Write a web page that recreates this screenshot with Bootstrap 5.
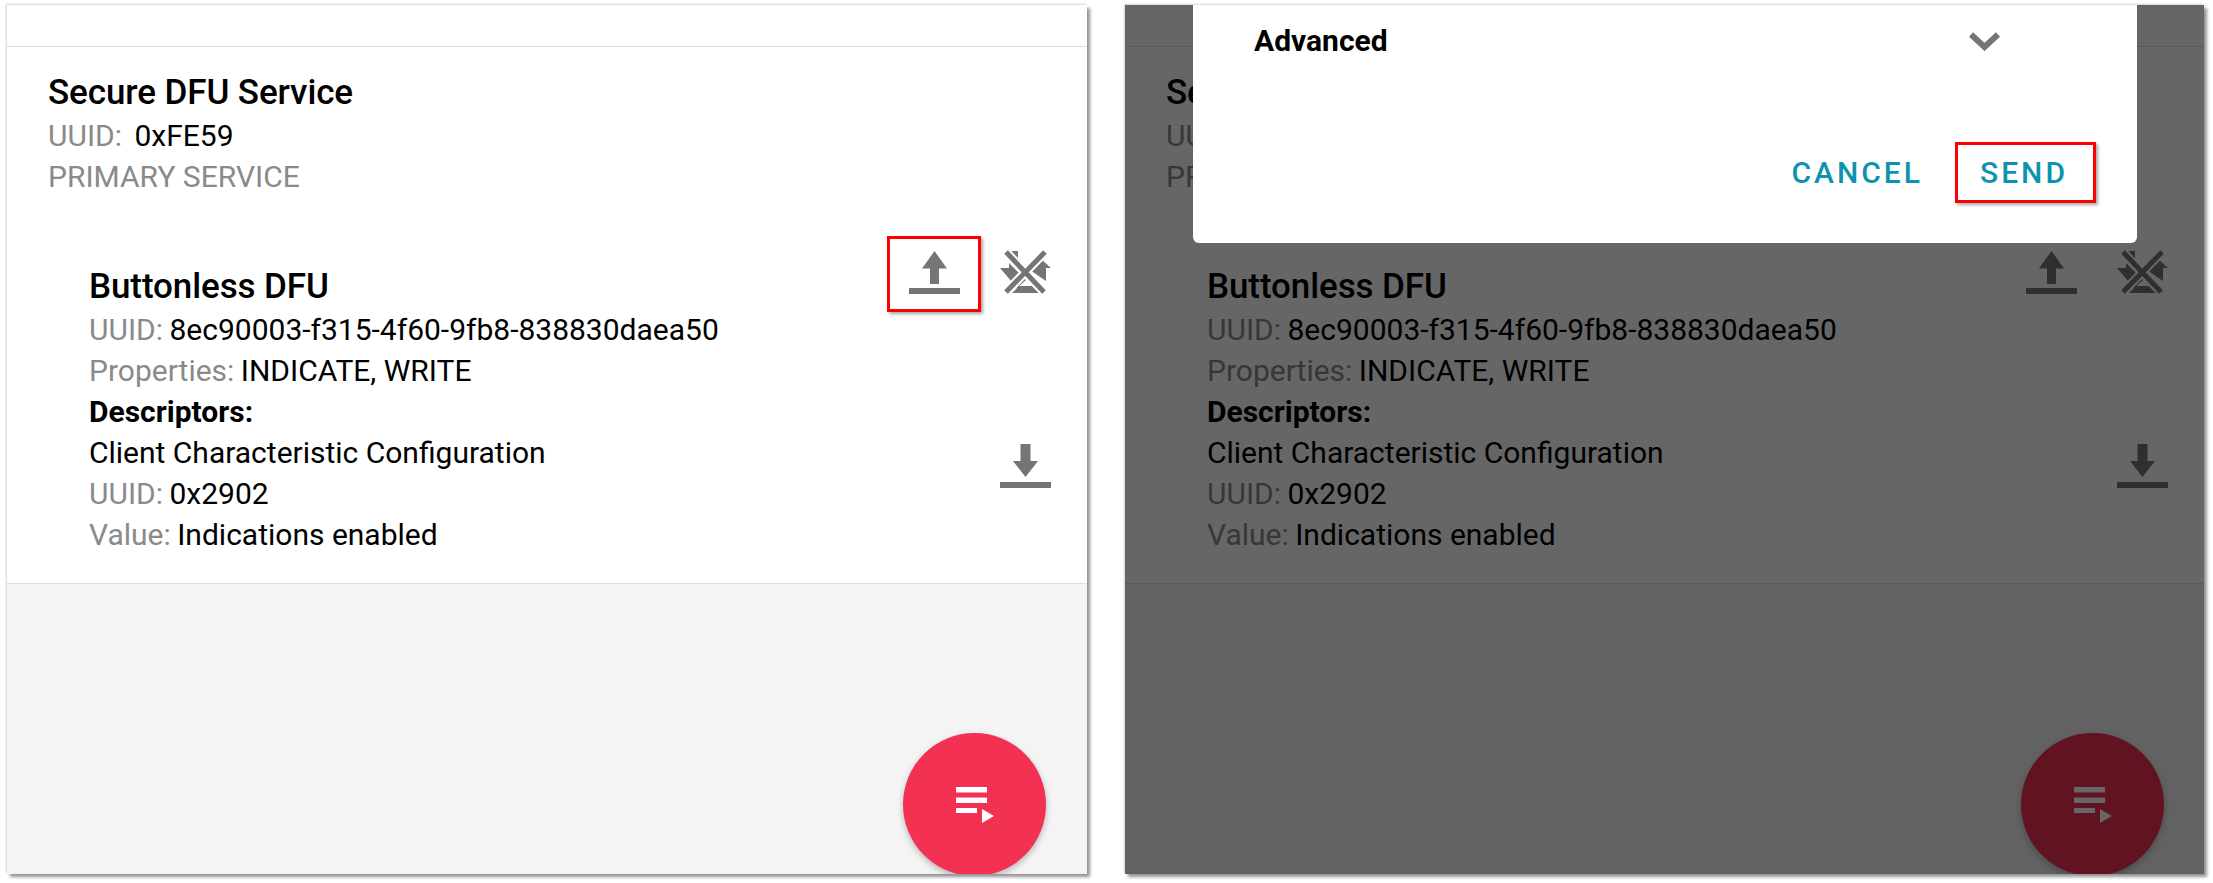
<!DOCTYPE html>
<html lang="en">
<head>
<meta charset="utf-8">
<title>Secure DFU Service</title>
<link href="https://cdn.jsdelivr.net/npm/bootstrap@5.3.0/dist/css/bootstrap.min.css" rel="stylesheet">
<style>
html,body{height:100%}
body{background:#fff;font-family:Roboto,"Liberation Sans",sans-serif;color:#000;overflow:hidden}
.stage{height:883px;padding:5px 9px 9px 7px;gap:38px}
.phone{flex:0 0 1080px;height:869px;background:#f4f4f4;box-shadow:3px 3px 3px rgba(0,0,0,.42),-1px -1px 2px rgba(0,0,0,.18);overflow:hidden}
.phone-r{flex-basis:1079px}
.toolbar-gap{height:42px;background:#fff;border-bottom:1px solid #dedede}
.sheet{background:#fff;border-bottom:1px solid #dedede;height:537px}
.svc{padding:25px 0 0 41px}
.ttl{font-size:35px;font-weight:500;line-height:41px;margin-bottom:2px;letter-spacing:-.1px}
.ln{font-size:30px;line-height:41px;white-space:nowrap}
.mut{color:#8a8a8a}
.gap1{margin-right:5px}
.chr{padding:0 36px 0 82px;margin-top:38px}
.chr .ttl{margin-top:31px}
.chr .mut{margin-right:-1px}
.acts{gap:19px;margin-top:1px}
.acts .ico{margin-bottom:4px}
.bx{width:94px;height:76px;border:3px solid #f00;box-shadow:2px 2px 3px rgba(0,0,0,.35)}
.ico{display:block}
.iconcell{width:94px;height:76px}
.dl-row{margin-top:132px}
.fab{position:absolute;left:896px;top:728px;width:143px;height:143px;border-radius:50%;background:#f23153;box-shadow:0 3px 6px rgba(0,0,0,.25)}
.scrim{position:absolute;inset:0;background:rgba(0,0,0,.6)}
.dlg{position:absolute;left:68px;top:0;width:944px;height:238px;background:#fff;border-radius:0 0 6px 6px}
.adv-row{padding:15px 137px 0 61px}
.adv{font-size:30px;font-weight:700;line-height:42px}
.dlg-actions{position:absolute;right:41px;bottom:40px;gap:32px}
.act{font-size:30px;font-weight:500;letter-spacing:3px;color:#0d93b0;line-height:1;padding-top:1px}
.send-box{width:141px;height:61px;border:3px solid #f00;padding-right:3px;box-shadow:2px 2px 3px rgba(0,0,0,.35)}
</style>
</head>
<body>
<svg width="0" height="0" class="position-absolute">
  <symbol id="i-up" viewBox="0 0 51 43"><path fill="#757575" d="M25.500 0L38 17.500H30V33H21V17.500H13ZM0 37H51V43H0Z"/></symbol>
  <symbol id="i-down" viewBox="0 0 51 44"><path fill="#757575" d="M20.500 0H30.500V17H38L25.500 33L13 17H20.500ZM0 38H51V44H0Z"/></symbol>
  <symbol id="i-off" viewBox="0 0 51 44">
    <path fill="#757575" d="M0 18H9V13L26 30L17 38ZM11 1H18V11ZM30 20L41 9L51 18H46V31ZM12 43L19 36H32L39 43Z"/>
    <path d="M6 2L44 42M45 2L6 42" fill="none" stroke="#fff" stroke-width="9"/>
    <path d="M6 2L44 42M45 2L6 42" fill="none" stroke="#757575" stroke-width="5"/>
  </symbol>
  <symbol id="i-fab" viewBox="0 0 38 36"><path d="M0 0H31V5.500H0ZM0 10.500H31V16H0ZM0 21H21V26H0ZM26 22L38 29L26 36Z"/></symbol>
</svg>
<div class="stage d-flex">

<div class="phone phone-l position-relative">
  <div class="toolbar-gap"></div>
  <div class="sheet">
    <div class="svc">
      <div class="ttl">Secure DFU Service</div>
      <div class="ln"><span class="mut gap1">UUID:</span> 0xFE59</div>
      <div class="ln mut">PRIMARY SERVICE</div>
    </div>
    <div class="chr d-flex justify-content-between align-items-start">
      <div>
        <div class="ttl">Buttonless DFU</div>
        <div class="ln"><span class="mut">UUID:</span> 8ec90003-f315-4f60-9fb8-838830daea50</div>
        <div class="ln"><span class="mut">Properties:</span> INDICATE, WRITE</div>
        <div class="ln fw-bold">Descriptors:</div>
        <div class="ln">Client Characteristic Configuration</div>
        <div class="ln"><span class="mut">UUID:</span> 0x2902</div>
        <div class="ln"><span class="mut">Value:</span> Indications enabled</div>
      </div>
      <div class="d-flex flex-column align-items-end">
        <div class="d-flex acts align-items-center">
          <div class="bx d-flex align-items-center justify-content-center">
            <svg class="ico" width="51" height="43"><use href="#i-up"/></svg>
          </div>
          <svg class="ico" width="51" height="44"><use href="#i-off"/></svg>
        </div>
        <svg class="ico dl-row" width="51" height="44"><use href="#i-down"/></svg>
      </div>
    </div>
  </div>
  <div class="fab d-flex align-items-center justify-content-center">
    <svg width="38" height="36" fill="#fff"><use href="#i-fab"/></svg>
  </div>
</div>

<div class="phone phone-r position-relative">
  <div class="toolbar-gap"></div>
  <div class="sheet">
    <div class="svc">
      <div class="ttl">Secure DFU Service</div>
      <div class="ln"><span class="mut gap1">UUID:</span> 0xFE59</div>
      <div class="ln mut">PRIMARY SERVICE</div>
    </div>
    <div class="chr d-flex justify-content-between align-items-start">
      <div>
        <div class="ttl">Buttonless DFU</div>
        <div class="ln"><span class="mut">UUID:</span> 8ec90003-f315-4f60-9fb8-838830daea50</div>
        <div class="ln"><span class="mut">Properties:</span> INDICATE, WRITE</div>
        <div class="ln fw-bold">Descriptors:</div>
        <div class="ln">Client Characteristic Configuration</div>
        <div class="ln"><span class="mut">UUID:</span> 0x2902</div>
        <div class="ln"><span class="mut">Value:</span> Indications enabled</div>
      </div>
      <div class="d-flex flex-column align-items-end">
        <div class="d-flex acts align-items-center">
          <div class="iconcell d-flex align-items-center justify-content-center">
            <svg class="ico" width="51" height="43"><use href="#i-up"/></svg>
          </div>
          <svg class="ico" width="51" height="44"><use href="#i-off"/></svg>
        </div>
        <svg class="ico dl-row" width="51" height="44"><use href="#i-down"/></svg>
      </div>
    </div>
  </div>
  <div class="fab d-flex align-items-center justify-content-center">
    <svg width="38" height="36" fill="#fff"><use href="#i-fab"/></svg>
  </div>
  <div class="scrim"></div>
  <div class="dlg">
    <div class="adv-row d-flex justify-content-between align-items-center">
      <div class="adv">Advanced</div>
      <svg width="31" height="19" viewBox="0 0 31 19"><path d="M2 2.500L15.500 15L29 2.500" fill="none" stroke="#757575" stroke-width="6"/></svg>
    </div>
    <div class="dlg-actions d-flex align-items-center">
      <div class="act">CANCEL</div>
      <div class="send-box act d-flex align-items-center justify-content-center">SEND</div>
    </div>
  </div>
</div>

</div>
<script src="https://cdn.jsdelivr.net/npm/bootstrap@5.3.0/dist/js/bootstrap.bundle.min.js"></script>
</body>
</html>
